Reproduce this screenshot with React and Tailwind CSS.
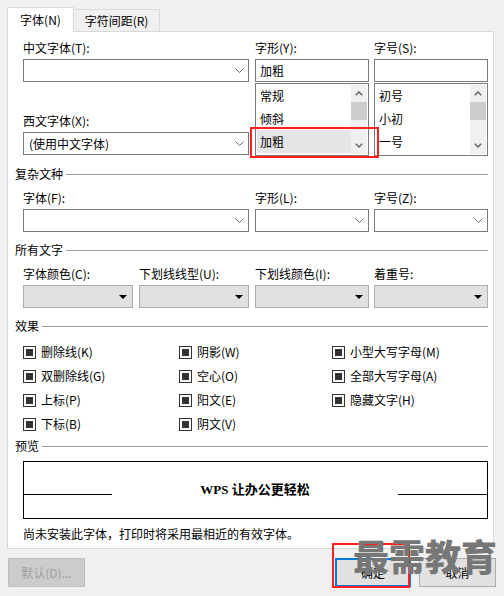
import React from 'react';

const Chevron = () => (
  <svg width="9" height="5" viewBox="0 0 9 5">
    <path d="M0.5 0.5 L4.5 4.5 L8.5 0.5" stroke="#6a6a6a" strokeWidth="1" fill="none" />
  </svg>
);

const Triangle = () => (
  <svg width="8" height="4" viewBox="0 0 8 4">
    <path d="M0 0 H8 L4 4 Z" fill="#000" />
  </svg>
);

const ArrowUp = () => (
  <svg width="8" height="5" viewBox="0 0 8 5">
    <path d="M0.8 4.2 L4 1 L7.2 4.2" stroke="#606060" strokeWidth="1.4" fill="none" />
  </svg>
);

const ArrowDown = () => (
  <svg width="8" height="5" viewBox="0 0 8 5">
    <path d="M0.8 0.8 L4 4 L7.2 0.8" stroke="#606060" strokeWidth="1.4" fill="none" />
  </svg>
);

function Label({ children }) {
  return <div className="h-4 leading-4 whitespace-nowrap">{children}</div>;
}

function Combo({ value, className = '' }) {
  return (
    <div className={`h-[23px] border border-[#7a7a7a] bg-white flex items-center justify-between pl-[5px] pr-[4px] ${className}`}>
      <span>{value}</span>
      <Chevron />
    </div>
  );
}

function Dropdown({ className = '' }) {
  return (
    <div className={`h-[23px] border border-[#adadad] bg-[#e1e1e1] flex items-center justify-end pr-[5px] ${className}`}>
      <Triangle />
    </div>
  );
}

function SectionHeader({ title, className = '' }) {
  return (
    <div className={`h-4 flex items-center pr-[5px] ${className}`}>
      <span className="leading-4">{title}</span>
      <div className="flex-1 h-px bg-[#a0a0a0] ml-[3px]" />
    </div>
  );
}

function ListBox({ items, selected }) {
  return (
    <div className="mt-px h-[73px] border border-[#7a7a7a] bg-white flex">
      <div className="flex-1 flex flex-col">
        {items.map((item, i) => (
          <div
            key={item}
            className={`h-[23px] ml-px pl-[3px] flex items-center ${i === selected ? 'bg-[#e5e5e5]' : ''}`}
          >
            {item}
          </div>
        ))}
      </div>
      <div className="w-4 my-px mr-px bg-[#f0f0f0] flex flex-col items-center">
        <div className="h-[17px] flex items-center justify-center"><ArrowUp /></div>
        <div className="w-4 h-[18px] bg-[#cdcdcd]" />
        <div className="flex-1" />
        <div className="h-[17px] flex items-center justify-center"><ArrowDown /></div>
      </div>
    </div>
  );
}

function Check({ label }) {
  return (
    <div className="h-6 flex items-center">
      <div className="w-[13px] h-[13px] border border-[#333] p-[2px] bg-white">
        <div className="w-full h-full bg-[#333]" />
      </div>
      <span className="ml-[5px] whitespace-nowrap">{label}</span>
    </div>
  );
}

export default function App() {
  return (
    <div className="relative w-[504px] h-[596px] overflow-hidden bg-[#f0f0f0] text-black text-[12px] leading-4 font-['Noto_Sans_CJK_SC',sans-serif]">
      {/* Tabs */}
      <div className="flex items-end h-6 mt-[7px] ml-[7px]">
        <div className="relative z-10 w-[67px] h-[25px] -mb-px bg-white border border-b-0 border-[#d9d9d9] flex items-center justify-center pb-px">
          字体(N)
        </div>
        <div className="w-[86px] h-[22px] border border-l-0 border-b-0 border-[#d9d9d9] bg-[#f0f0f0] flex items-center justify-center">
          字符间距(R)
        </div>
      </div>

      {/* Panel */}
      <div className="ml-[7px] w-[487px] h-[518px] border border-[#d9d9d9] bg-white pl-[7px]">
        {/* Top section */}
        <div className="ml-[8px] flex">
          <div className="w-[226px]">
            <div className="mt-[8px]"><Label>中文字体(T):</Label></div>
            <Combo className="mt-[3px]" />
            <div className="mt-[31px]"><Label>西文字体(X):</Label></div>
            <Combo className="mt-[3px]" value="(使用中文字体)" />
          </div>
          <div className="w-[114px] ml-[6px]">
            <div className="mt-[8px]"><Label>字形(Y):</Label></div>
            <div className="mt-[3px] h-[23px] border border-[#7a7a7a] bg-white flex items-center pl-[4px]">加粗</div>
            <ListBox items={['常规', '倾斜', '加粗']} selected={2} />
          </div>
          <div className="w-[114px] ml-[5px]">
            <div className="mt-[8px]"><Label>字号(S):</Label></div>
            <div className="mt-[3px] h-[23px] border border-[#7a7a7a] bg-white" />
            <ListBox items={['初号', '小初', '一号']} selected={-1} />
          </div>
        </div>

        {/* 复杂文种 */}
        <SectionHeader title="复杂文种" className="mt-[10px]" />
        <div className="ml-[8px] flex">
          <div className="w-[226px]">
            <div className="mt-[8px]"><Label>字体(F):</Label></div>
            <Combo className="mt-[3px]" />
          </div>
          <div className="w-[114px] ml-[6px]">
            <div className="mt-[8px]"><Label>字形(L):</Label></div>
            <Combo className="mt-[3px]" />
          </div>
          <div className="w-[114px] ml-[5px]">
            <div className="mt-[8px]"><Label>字号(Z):</Label></div>
            <Combo className="mt-[3px]" />
          </div>
        </div>

        {/* 所有文字 */}
        <SectionHeader title="所有文字" className="mt-[10px]" />
        <div className="ml-[8px] flex">
          <div className="w-[110px]">
            <div className="mt-[8px]"><Label>字体颜色(C):</Label></div>
            <Dropdown className="mt-[3px]" />
          </div>
          <div className="w-[110px] ml-[6px]">
            <div className="mt-[8px]"><Label>下划线线型(U):</Label></div>
            <Dropdown className="mt-[3px]" />
          </div>
          <div className="w-[114px] ml-[6px]">
            <div className="mt-[8px]"><Label>下划线颜色(I):</Label></div>
            <Dropdown className="mt-[3px]" />
          </div>
          <div className="w-[114px] ml-[5px]">
            <div className="mt-[8px]"><Label>着重号:</Label></div>
            <Dropdown className="mt-[3px]" />
          </div>
        </div>

        {/* 效果 */}
        <SectionHeader title="效果" className="mt-[10px]" />
        <div className="ml-[8px] mt-[6px] flex">
          <div className="w-[156px]">
            <Check label="删除线(K)" />
            <Check label="双删除线(G)" />
            <Check label="上标(P)" />
            <Check label="下标(B)" />
          </div>
          <div className="w-[153px]">
            <Check label="阴影(W)" />
            <Check label="空心(O)" />
            <Check label="阳文(E)" />
            <Check label="阴文(V)" />
          </div>
          <div>
            <Check label="小型大写字母(M)" />
            <Check label="全部大写字母(A)" />
            <Check label="隐藏文字(H)" />
          </div>
        </div>

        {/* 预览 */}
        <SectionHeader title="预览" className="mt-[2px]" />
        <div className="ml-[8px] mt-[7px] w-[465px] h-[58px] border border-black flex items-center">
          <div className="w-[88px] h-px bg-black mt-[9px]" />
          <div className="flex-1 text-center font-bold text-[13px] font-['Liberation_Serif','Noto_Sans_CJK_SC',serif]">
            WPS 让办公更轻松
          </div>
          <div className="w-[89px] h-px bg-black mt-[9px]" />
        </div>
        <div className="ml-[8px] mt-[7px] h-4">尚未安装此字体，打印时将采用最相近的有效字体。</div>
      </div>

      {/* Buttons */}
      <div className="flex mt-[9px] h-[29px]">
        <div className="ml-[8px] w-[77px] h-[29px] bg-[#cccccc] border border-[#bfbfbf] text-[#a0a0a0] flex items-center justify-center">
          默认(D)...
        </div>
        <div className="ml-[250px] w-[76px] h-[29px] bg-[#e1e1e1] border-2 border-[#0078d7] flex items-center justify-center">
          确定
        </div>
        <div className="ml-[8px] w-[77px] h-[29px] bg-[#e1e1e1] border border-[#adadad] flex items-center justify-center">
          取消
        </div>
      </div>

      {/* annotations */}
      <div className="absolute left-[250px] top-[127px] w-[129px] h-[31px] border-2 border-[#ff2020]" />
      <div className="absolute left-[332px] top-[543px] w-[78px] h-[45px] border-2 border-[#ff2020]" />
      <div className="absolute left-[353px] top-[533px] text-[36px] leading-[44px] font-black text-[#777777] whitespace-nowrap">
        最需教育
      </div>
    </div>
  );
}
